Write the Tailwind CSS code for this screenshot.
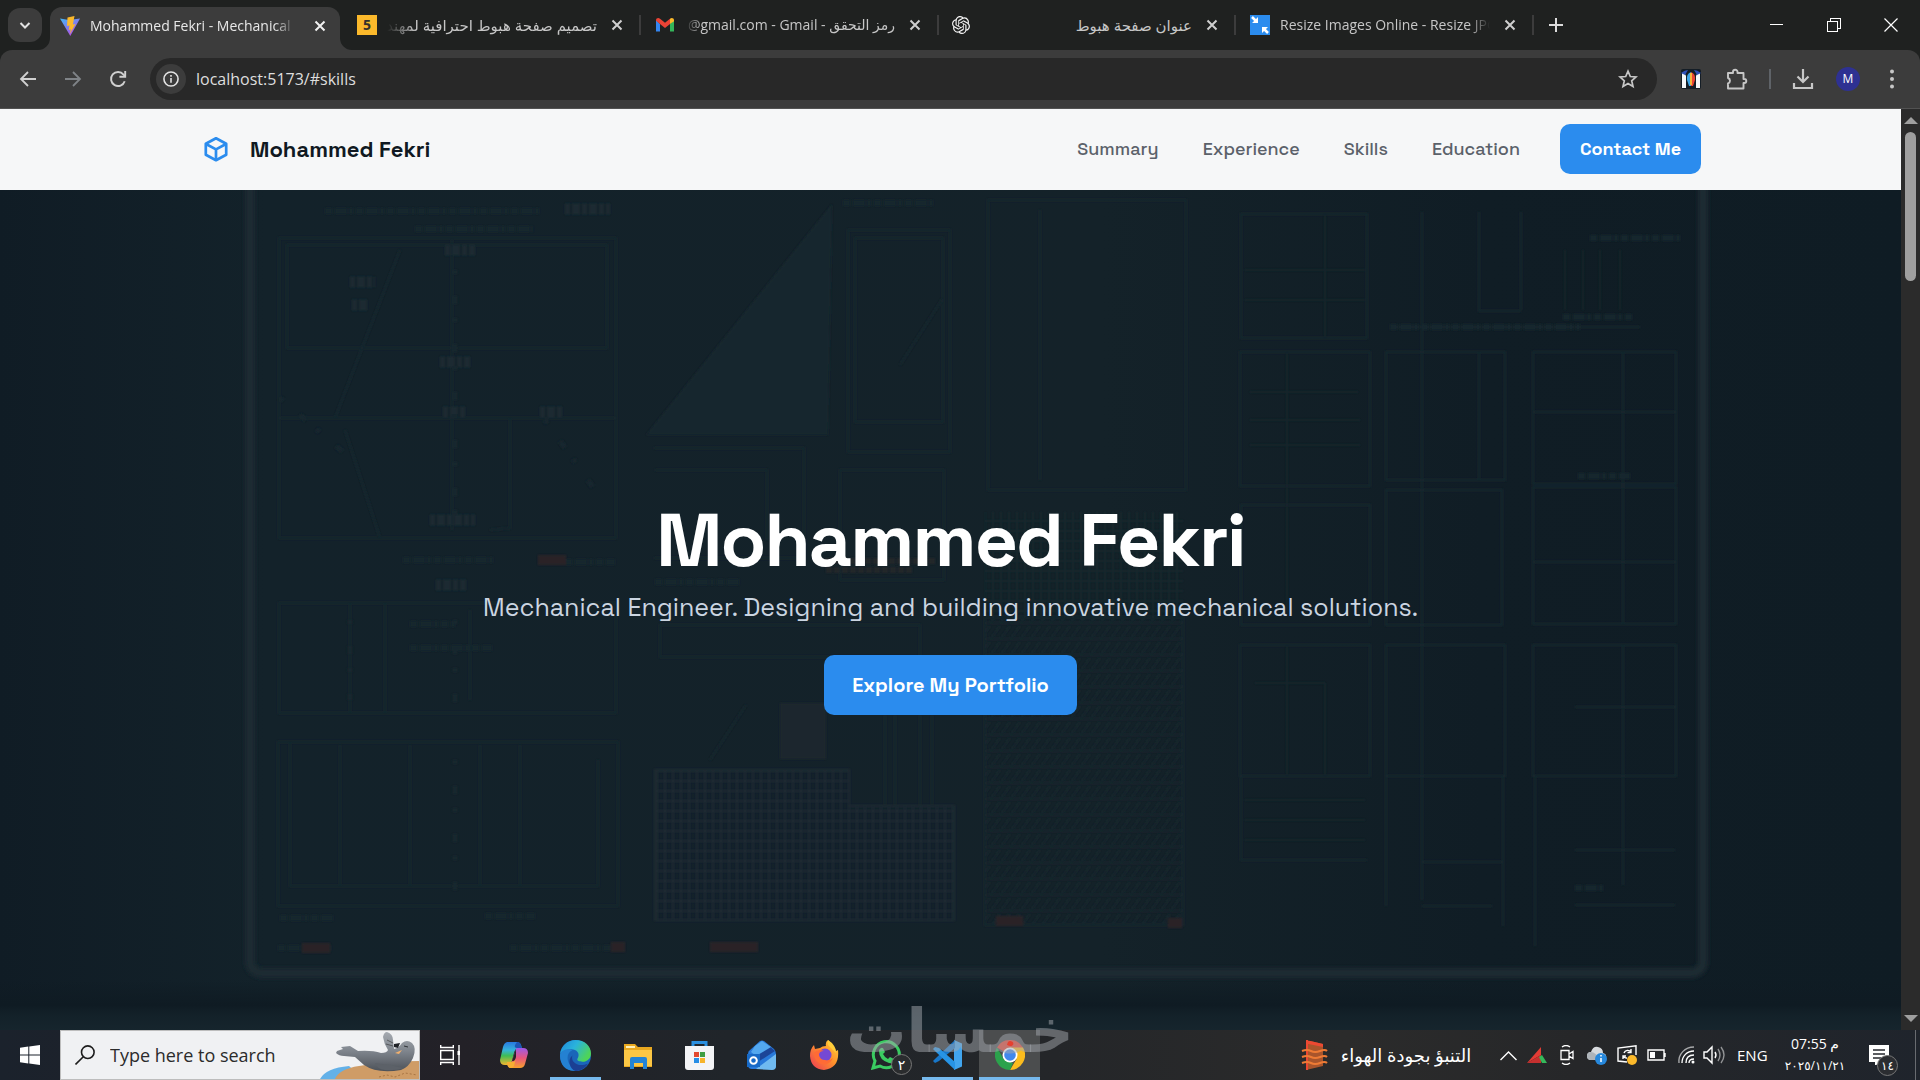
<!DOCTYPE html>
<html lang="en">
<head>
    <meta charset="UTF-8">
    <meta name="viewport" content="width=device-width, initial-scale=1.0">
    <title>Mohammed Fekri - Mechanical Engineer</title>
    <script src="https://cdn.jsdelivr.net/npm/@tailwindcss/browser@4"></script>
</head>
<body class="flex h-screen flex-col overflow-hidden bg-[#13212a] font-['Segoe_UI','Open_Sans','DejaVu_Sans',sans-serif]">

    <!-- Tab strip -->
    <div class="flex h-[50px] shrink-0 items-center bg-[#1f2120] text-sm text-[#c7c7c7]">
        <button aria-label="Search tabs" class="ml-2 mr-2 grid size-[34px] shrink-0 place-items-center rounded-xl bg-[#3c3c3c]">
            <svg class="size-4" viewBox="0 0 16 16" fill="none" stroke="#e3e3e3" stroke-width="2"><path d="M3.500 6l4.500 4.500L12.500 6"/></svg>
        </button>
        <div class="relative mt-[7px] flex h-[43px] w-[290px] shrink-0 items-center rounded-t-xl bg-[#3c3c3c] pl-2.5 pb-1.5 text-[#e8e8e8]">
            <svg class="absolute bottom-0 -left-3 size-3" viewBox="0 0 12 12"><path d="M12 0v12H0A12 12 0 0 0 12 0z" fill="#3c3c3c"/></svg>
            <svg class="absolute bottom-0 -right-3 size-3" viewBox="0 0 12 12"><path d="M0 0v12h12A12 12 0 0 1 0 0z" fill="#3c3c3c"/></svg>
            <svg class="size-5 shrink-0" viewBox="0 0 20 20">
                <defs><linearGradient id="vite" x1="0" y1="0" x2=".6" y2="1"><stop stop-color="#41b8f5"/><stop offset="1" stop-color="#b54ee8"/></linearGradient></defs>
                <path d="M0 2.500l9 1.500 11-1.500L10.300 20z" fill="url(#vite)"/><path d="M14.500 0L7.500 1.500 7 10l2.500-.6-.8 4.500 2.200-.6-1.200 5 5.800-10.400-2.600.6z" fill="#fbb92b"/>
            </svg>
            <span class="ml-2.5 w-[205px] overflow-hidden whitespace-nowrap [mask-image:linear-gradient(to_right,black_90%,transparent)]">Mohammed Fekri - Mechanical Engineer</span>
            <button aria-label="Close tab" class="ml-[17px] grid size-4 place-items-center"><svg class="size-3" viewBox="0 0 12 12" stroke="#f1f1f1" stroke-width="2"><path d="M1.500 1.500l9 9M10.500 1.500l-9 9"/></svg></button>
        </div>
        <div class="ml-1 flex h-5 w-[297px] shrink-0 items-center border-r-2 border-[#3c3c3c] pl-[13px]">
            <span class="grid size-5 shrink-0 place-items-center bg-[#fbb92b] text-sm font-bold text-[#33312c]">5</span>
            <span dir="rtl" class="ml-2.5 w-[210px] overflow-hidden whitespace-nowrap text-[15px] leading-6 [mask-image:linear-gradient(to_left,black_86%,transparent)]">تصميم صفحة هبوط احترافية لمهندس</span>
            <button aria-label="Close tab" class="ml-3 grid size-4 place-items-center"><svg class="size-3" viewBox="0 0 12 12" stroke="#cfcfcf" stroke-width="2"><path d="M1.500 1.500l9 9M10.500 1.500l-9 9"/></svg></button>
        </div>
        <div class="flex h-5 w-[298px] shrink-0 items-center border-r-2 border-[#3c3c3c] pl-[13px]">
            <svg class="ml-px size-5 shrink-0" viewBox="0 0 20 20"><path d="M1 5v11.500h4V9z" fill="#3486f0"/><path d="M19 5v11.500h-4V9z" fill="#34b55a"/><path d="M1 5.500C1 3 3.500 2.500 5 3.800l5 4 5-4 0 5.200-5 4-5-4-4-3.200z" fill="#ea4335"/><path d="M15 3.800c1.700-1.400 4-.6 4 1.600v.8L15 9z" fill="#fbb92b"/></svg>
            <span dir="rtl" class="ml-2.5 w-[210px] overflow-hidden whitespace-nowrap leading-6 [mask-image:linear-gradient(to_left,black_92%,transparent)]">رمز التحقق - <bdi dir="ltr">@gmail.com - Gmail</bdi></span>
            <button aria-label="Close tab" class="ml-3 grid size-4 place-items-center"><svg class="size-3" viewBox="0 0 12 12" stroke="#cfcfcf" stroke-width="2"><path d="M1.500 1.500l9 9M10.500 1.500l-9 9"/></svg></button>
        </div>
        <div class="flex h-5 w-[297px] shrink-0 items-center border-r-2 border-[#3c3c3c] pl-[13px]">
            <svg class="size-[18px] shrink-0" viewBox="0 0 24 24" fill="#f4f4f4"><path d="M22.2819 9.8211a5.9847 5.9847 0 0 0-.5157-4.9108 6.0462 6.0462 0 0 0-6.5098-2.9A6.0651 6.0651 0 0 0 4.9807 4.1818a5.9847 5.9847 0 0 0-3.9977 2.9 6.0462 6.0462 0 0 0 .7427 7.0966 5.98 5.98 0 0 0 .511 4.9107 6.051 6.051 0 0 0 6.5146 2.9001A5.9847 5.9847 0 0 0 13.2599 24a6.0557 6.0557 0 0 0 5.7718-4.2058 5.9894 5.9894 0 0 0 3.9977-2.9001 6.0557 6.0557 0 0 0-.7475-7.0729zm-9.022 12.6081a4.4755 4.4755 0 0 1-2.8764-1.0408l.1419-.0804 4.7783-2.7582a.7948.7948 0 0 0 .3927-.6813v-6.7369l2.02 1.1686a.071.071 0 0 1 .038.052v5.5826a4.504 4.504 0 0 1-4.4945 4.4944zm-9.6607-4.1254a4.4708 4.4708 0 0 1-.5346-3.0137l.142.0852 4.783 2.7582a.7712.7712 0 0 0 .7806 0l5.8428-3.3685v2.3324a.0804.0804 0 0 1-.0332.0615L9.74 19.9502a4.4992 4.4992 0 0 1-6.1408-1.6464zM2.3408 7.8956a4.485 4.485 0 0 1 2.3655-1.9728V11.6a.7664.7664 0 0 0 .3879.6765l5.8144 3.3543-2.0201 1.1685a.0757.0757 0 0 1-.071 0l-4.8303-2.7865A4.504 4.504 0 0 1 2.3408 7.872zm16.5963 3.8558L13.1038 8.364 15.1192 7.2a.0757.0757 0 0 1 .071 0l4.8303 2.7913a4.4944 4.4944 0 0 1-.6765 8.1042v-5.6772a.79.79 0 0 0-.407-.667zm2.0107-3.0231l-.142-.0852-4.7735-2.7818a.7759.7759 0 0 0-.7854 0L9.409 9.2297V6.8974a.0662.0662 0 0 1 .0284-.0615l4.8303-2.7866a4.4992 4.4992 0 0 1 6.6802 4.66zM8.3065 12.863l-2.02-1.1638a.0804.0804 0 0 1-.038-.0567V6.0742a4.4992 4.4992 0 0 1 7.3757-3.4537l-.142.0805L8.704 5.459a.7948.7948 0 0 0-.3927.6813zm1.0976-2.3654l2.602-1.4998 2.6069 1.4998v2.9994l-2.5974 1.4997-2.6067-1.4997Z"/></svg>
            <span dir="rtl" class="ml-3 w-[210px] overflow-hidden whitespace-nowrap text-[15px] leading-6">عنوان صفحة هبوط</span>
            <button aria-label="Close tab" class="ml-3 grid size-4 place-items-center"><svg class="size-3" viewBox="0 0 12 12" stroke="#cfcfcf" stroke-width="2"><path d="M1.500 1.500l9 9M10.500 1.500l-9 9"/></svg></button>
        </div>
        <div class="flex h-5 w-[298px] shrink-0 items-center border-r-2 border-[#3c3c3c] pl-[13px]">
            <svg class="ml-px size-5 shrink-0" viewBox="0 0 20 20"><path d="M0 0h20v20H0z" fill="#2b8cee"/><path d="M2 2l4 4M18 18l-4-4" stroke="#fff" stroke-width="2.500"/><path d="M8 2v6H2zM12 18v-6h6z" fill="#fff"/></svg>
            <span class="ml-2.5 w-[210px] overflow-hidden whitespace-nowrap leading-6 [mask-image:linear-gradient(to_right,black_90%,transparent)]">Resize Images Online - Resize JPG</span>
            <button aria-label="Close tab" class="ml-3 grid size-4 place-items-center"><svg class="size-3" viewBox="0 0 12 12" stroke="#cfcfcf" stroke-width="2"><path d="M1.500 1.500l9 9M10.500 1.500l-9 9"/></svg></button>
        </div>
        <button aria-label="New tab" class="ml-3.5 grid size-4 place-items-center"><svg class="size-3.5" viewBox="0 0 14 14" stroke="#dcdcdc" stroke-width="2"><path d="M7 0v14M0 7h14"/></svg></button>
        <div class="ml-auto mr-[22px] flex items-center gap-[43px]">
            <button aria-label="Minimize"><svg class="size-3.5" viewBox="0 0 14 14" stroke="#fff" stroke-width="1" shape-rendering="crispEdges"><path d="M0 6.500h13"/></svg></button>
            <button aria-label="Restore"><svg class="size-3.5" viewBox="0 0 14 14" fill="none" stroke="#fff" shape-rendering="crispEdges"><path d="M.5 3.500h10v10H.5zM3.500 3V.5h10v10H11"/></svg></button>
            <button aria-label="Close"><svg class="size-3.5" viewBox="0 0 14 14" stroke="#fff" stroke-width="1.200"><path d="M.5.5l13 13M13.500.5l-13 13"/></svg></button>
        </div>
    </div>

    <!-- Toolbar -->
    <div class="shrink-0 bg-[#1f2120]">
    <div class="flex h-[59px] items-center rounded-t-xl border-b border-[#525252] bg-[#3c3c3c] px-[18px]">
        <button aria-label="Back"><svg class="size-5" viewBox="0 0 20 20" fill="none" stroke="#d0d0d0" stroke-width="1.800"><path d="M18 10H3.500M10 3l-7 7 7 7"/></svg></button>
        <button aria-label="Forward" class="ml-[25px]"><svg class="size-5" viewBox="0 0 20 20" fill="none" stroke="#7f8387" stroke-width="1.800"><path d="M2 10h14.500M10 3l7 7-7 7"/></svg></button>
        <button aria-label="Reload" class="ml-[25px]"><svg class="size-5" viewBox="0 0 20 20" fill="none" stroke="#d0d0d0" stroke-width="1.900"><path d="M16.700 12.200A7 7 0 1 1 15.500 5.600l1.500 1.600"/><path d="M17.200 2v5.800h-5.800"/></svg></button>
        <div class="ml-[22px] flex h-[42px] flex-1 items-center rounded-full bg-[#282828] pl-1.5 pr-[19px]">
            <span class="grid size-[30px] place-items-center rounded-full bg-[#3c3c3c]">
                <svg class="size-4" viewBox="0 0 17 17" fill="none" stroke="#e3e3e3" stroke-width="1.700"><circle cx="8.500" cy="8.500" r="7.500"/><path d="M8.500 7.500v5M8.500 4.200v1.800"/></svg>
            </span>
            <input aria-label="Address" value="localhost:5173/#skills" class="ml-2.5 min-w-0 flex-1 bg-transparent text-base text-[#dedede] outline-none">
            <button aria-label="Bookmark this tab"><svg class="size-5" viewBox="0 0 20 20" fill="none" stroke="#c7c7c7" stroke-width="1.700"><path d="M10 2.200l2.300 5.300 5.700.5-4.300 3.800 1.300 5.600-5-3-5 3 1.300-5.600L2 8l5.700-.5z"/></svg></button>
        </div>
        <svg class="ml-6 size-5" viewBox="0 0 20 20"><rect width="20" height="20" rx="2" fill="#141d26"/><path d="M1 4q3 0 4 3v12H1zM19 4q-3 0-4 3v12h4z" fill="#f6f8fa"/><path d="M0 4q4-3 7-3l-3 5zM20 4q-4-3-7-3l3 5z" fill="#2f50b8"/><path d="M10 3Q5 5 6 11l2 6h2z" fill="#3da5e8"/><path d="M10 3q5 2 4 8l-2 6h-2z" fill="#ea4335"/><path d="M9 4h2v12H9z" fill="#f4b33d"/></svg>
        <button aria-label="Extensions" class="ml-6"><svg class="size-[23px]" viewBox="0 0 23 23" fill="none" stroke="#c7c7c7" stroke-width="1.900" stroke-linejoin="round"><path d="M3 5h5V4a2 2 0 0 1 4.500 0v1h6v6h.8a2 2 0 0 1 0 4h-.8v5.500H3v-5a2.900 2.900 0 0 0 0-5.500z"/></svg></button>
        <span class="ml-[21px] h-5 w-0.5 bg-[#5f6368]"></span>
        <button aria-label="Downloads" class="ml-[21px]"><svg class="size-[22px]" viewBox="0 0 22 22" fill="none" stroke="#c7c7c7" stroke-width="2.200"><path d="M11 1v13M5.500 8.500L11 14l5.500-5.500M2 15v5h18v-5"/></svg></button>
        <button aria-label="Profile" class="ml-[22px] grid size-6 place-items-center rounded-full bg-[#2e3192] text-xs text-white">M</button>
        <button aria-label="Menu" class="ml-[22px]"><svg class="size-5" viewBox="0 0 20 20" fill="#c7c7c7"><circle cx="10" cy="2.500" r="2"/><circle cx="10" cy="10" r="2"/><circle cx="10" cy="17.500" r="2"/></svg></button>
    </div>
    </div>

    <!-- Page with its scrollbar -->
    <div class="flex min-h-0 flex-1">
        <div class="flex min-w-0 flex-1 flex-col font-['Space_Grotesk','Inter',sans-serif]">
            <header class="flex h-[81px] shrink-0 items-center justify-between bg-[#f6f7f8] px-[200px] pb-0.5">
                <div class="flex items-center gap-[18px]">
                    <svg class="size-8" viewBox="0 0 32 32" fill="none" stroke="#2b8cee" stroke-width="2.700" stroke-linejoin="round"><path d="M16 5.300l10.200 5.500v11L16 27.200 5.800 21.800v-11z"/><path d="M6 11l10 5.400L26 11M16 16.400v10.500"/></svg>
                    <span class="text-[22px] font-bold leading-7 text-[#101922]">Mohammed Fekri</span>
                </div>
                <nav class="flex items-center gap-11 text-lg font-medium text-[#5b616a]">
                    <a href="#summary">Summary</a>
                    <a href="#experience">Experience</a>
                    <a href="#skills">Skills</a>
                    <a href="#education">Education</a>
                    <a href="#contact" class="-ml-1 grid h-[50px] w-[141px] place-items-center rounded-[10px] bg-[#2b8cee] font-bold text-white">Contact Me</a>
                </nav>
            </header>

            <main class="relative flex flex-1 flex-col items-center justify-center overflow-hidden bg-[linear-gradient(90deg,#101c25_0%,#13222a_14%,#142229_58%,#101d25_78%,#0f1c24_100%)] pb-3">
                <!-- Blueprint drawing behind the hero text -->
                <svg class="absolute inset-0 size-full" viewBox="0 190 1901 840" preserveAspectRatio="none" fill="none">
                    <defs>
                        <filter id="soft" x="-5%" y="-5%" width="110%" height="110%"><feGaussianBlur stdDeviation="1.2"/></filter>
                        <filter id="glow" x="-5%" y="-5%" width="110%" height="110%"><feGaussianBlur stdDeviation="2"/></filter>
                        <linearGradient id="desk" x1="0" y1="980" x2="0" y2="1030" gradientUnits="userSpaceOnUse"><stop stop-color="#0f1b23" stop-opacity="0"/><stop offset=".5" stop-color="#0f1b23"/><stop offset=".7" stop-color="#132129"/><stop offset="1" stop-color="#16252d"/></linearGradient>
                        <pattern id="mesh" width="8" height="10" patternUnits="userSpaceOnUse"><path d="M1 0v10M0 1h8" stroke="#1a2930" stroke-width="2"/></pattern>
                        <pattern id="hatch" width="10" height="16" patternUnits="userSpaceOnUse"><path d="M0 16L10 2M0 15h10" stroke="#18272e" stroke-width="1.500"/></pattern>
                    </defs>
                    <path d="M0 980h1901v50H0z" fill="url(#desk)"/>
                    <path d="M250 160V960q0 13 13 13H1690q13 0 13-13V160" stroke="#1b2930" stroke-width="10" filter="url(#glow)"/>
                    <g filter="url(#soft)">
                        <path d="M832 204L646 435h182z" fill="#19272e"/>
                        <g stroke="#17262d" stroke-width="2">
                            <path d="M279 238h337v300H279zM287 245h320v103H287zM279 418h337M400 250L335 418M380 538L345 430M510 418v110L490 530M452 240v290"/>
                            <path d="M279 603h337v110H279zM385 603v110M350 603v110M470 610v90M278 742h340v164H278zM290 742v144h308V760M340 745v140M410 745v140M480 745v140M520 745v140"/>
                            <path d="M848 230h102v222H848zM855 238h88v184h-88zM943 298L900 365M654 448h150v110H654M655 470h112v70M840 470h104v110H840zM988 200h198v290H988zM1040 210v270"/>
                            <path d="M660 625h260v32H660zM746 705l-36 55M885 715v90M895 715v90M920 715v90M932 715v90"/>
                        </g>
                        <g stroke="#16252d" stroke-width="2">
                            <path d="M1241 214h126v124h-126zM1240 352h130v134h-130zM1386 352h119v128h-119zM1533 352h143v132h-143zM1241 505h129v120h-129zM1386 490h116v135h-116zM1533 487h143v137h-143zM1240 645h130v131h-130zM1386 645h119v131h-119zM1533 645h143v131h-143z"/>
                            <path d="M1422 212V900M1479 212v99h42M1479 352v128M1521 212v98M1623 352v272M1533 412h143M1533 562h143M1623 645v240M1575 707h101M1241 776v84h126M1386 776v130M1503 776v150M1535 776v170M1422 862h82M1422 906h70M1575 850h100M1575 905h100M1390 327h250"/>
                            <path d="M1245 270h120M1245 300h120M1250 392h108M1250 420h110M1250 445h110M1325 214v124M1287 352v260M1287 645v131M1325 683v93M1255 683h70M1245 800h120M1245 820h120M1245 840h120M1565 250v60M1583 250v60M1600 250v60M1620 250v60" opacity=".6"/>
                        </g>
                        <path d="M655 770h194v36h105v114H655z" fill="url(#mesh)" stroke="#1b2930" stroke-width="2"/>
                        <path d="M985 512h198v105H985z" fill="url(#mesh)" opacity=".5"/>
                        <path d="M985 617h198v308H985z" fill="url(#hatch)" stroke="#18262d" stroke-width="2"/>
                        <path d="M780 703h46v56h-46z" fill="#1a282f"/>
                        <path d="M825 561h110M826 570h88" stroke="#202529" stroke-width="6" stroke-dasharray="6 2"/>
                        <!-- Smudged labels and callouts -->
                        <g stroke="#19272e" stroke-width="6" stroke-dasharray="7 3 12 2 4 3">
                            <path d="M325 211h215M843 203h90M415 229h118M403 560h90M565 562h50M280 918h55M485 916h50M510 948h108M278 948h54M655 582h85M410 624h45M410 648h82M1390 327h190M1590 238h90M1563 317h70M1578 476h52M1575 888h30"/>
                        </g>
                        <path d="M565 209h45M440 362h30M443 412h24M350 282h25M352 305h16M540 412h24M445 250h30M436 585h30M430 520h45" stroke="#1b2930" stroke-width="11" stroke-dasharray="5 2 8 2"/>
                        <path d="M455 270v250M455 620v85M455 760v130M280 398l70 60M545 420l50 70M350 620v80" stroke="#19272e" stroke-width="5" stroke-dasharray="4 22 8 14"/>
                        <path d="M538 560h28M302 948h28M611 947h14M710 947h48M996 921h27M1168 923h14" stroke="#2c2427" stroke-width="10"/>
                    </g>
                </svg>
                <h1 class="relative text-[75px] font-bold leading-[94px] tracking-tight text-white">Mohammed Fekri</h1>
                <p class="relative text-[25px] leading-10 text-[#cbd5e1]">Mechanical Engineer. Designing and building innovative mechanical solutions.</p>
                <a href="#summary" class="relative mt-7 grid h-[60px] w-[253px] place-items-center rounded-[10px] bg-[#2b8cee] text-xl font-bold text-white">Explore My Portfolio</a>
            </main>
        </div>
        <div class="flex w-[19px] shrink-0 flex-col items-center bg-[#2b2b2b] py-2">
            <svg class="h-[7px] w-3.5" viewBox="0 0 14 7" fill="#9f9f9f"><path d="M7 0l7 7H0z"/></svg>
            <span class="mt-2 h-[149px] w-[11px] rounded-full bg-[#9f9f9f]"></span>
            <svg class="mt-auto h-[7px] w-3.5" viewBox="0 0 14 7" fill="#9f9f9f"><path d="M7 7l7-7H0z"/></svg>
        </div>
    </div>

    <!-- Taskbar -->
    <footer class="relative flex h-[50px] shrink-0 items-center bg-[linear-gradient(90deg,#1b222c_0%,#232127_24%,#20252a_38%,#242629_55%,#2b2b2b_70%,#262729_82%,#1f242c_100%)] text-white">
        <button aria-label="Start" class="grid h-full w-[60px] shrink-0 place-items-center"><svg class="size-5" viewBox="0 0 20 20" fill="#fff"><path d="M0 2.800L8.300 1.600V9.500H0zM9.300 1.500L20 0v9.500H9.300zM0 10.500h8.300v7.900L0 17.200zM9.300 10.500H20V20L9.300 18.500z"/></svg></button>
        <label class="relative flex h-full w-[360px] shrink-0 items-center overflow-hidden border border-[#bdbdbd] bg-[#f0f1f3]">
            <svg class="ml-3.5 size-5" viewBox="0 0 20 20" fill="none" stroke="#1d1d1d" stroke-width="1.600"><circle cx="12.800" cy="7.200" r="6.300"/><path d="M8.300 11.700L.5 19.500"/></svg>
            <input aria-label="Search" placeholder="Type here to search" class="ml-[15px] w-[200px] bg-transparent text-lg text-[#222] outline-none placeholder:text-[#2b2b2b]">
            <svg class="absolute bottom-0 right-0 h-12 w-[100px]" viewBox="0 0 100 48">
                <defs><linearGradient id="seal" x1="0" y1="0" x2="0" y2="1"><stop stop-color="#a5aab1"/><stop offset=".5" stop-color="#7e848c"/><stop offset="1" stop-color="#4c5158"/></linearGradient></defs>
                <path d="M1 48Q7 37 30 35L44 48z" fill="#63b1e8"/><path d="M16 48Q20 38 40 35 70 30 100 30v18z" fill="#cf9c66"/>
                <path d="M60 46l8-2 8 2 10-4 12 2" stroke="#a87543" stroke-dasharray="2 2" fill="none"/>
                <path d="M18 20l6-2-2-2 9-1 8 5q14-1 23 2 6 0 7-3-4-6-5-13 1-5 4-5 6 2 6 8l1 9q5-1 8-6 5-4 10 0 5 5 1 15-4 9-12 12-24 4-37-5l-9-8-11-1q-5 0-8-3z" fill="url(#seal)"/>
                <path d="M56 32q2 6 10 7 10 1 19-2-8-1-13-3-9-1-16-2z" fill="#5c6168"/><path d="M75 13l6-1-2 5-4-1z" fill="#1f2227"/><path d="M76 22l7-3-3 4z" fill="#f2b06d"/><path d="M74 12l-6-3M74 15l-7-2" stroke="#333" stroke-width=".6"/><path d="M85 15l4 1" stroke="#2f3338" fill="none"/>
            </svg>
        </label>
        <button aria-label="Task view" class="grid h-full w-[60px] shrink-0 place-items-center"><svg class="size-5" viewBox="0 0 20 20" fill="none" stroke="#fff" stroke-width="1.400"><path d="M.7 5.500h12.600v9H.7zM.7 0v2.500h12.600V0M.7 20v-2.500h12.600V20M19 0v20"/><path d="M17.500 6h3v4h-3z" fill="#fff" stroke="none"/></svg></button>
        <div class="ml-[3px] flex h-full shrink-0 gap-px">
            <button aria-label="Copilot" class="grid w-[61px] place-items-center">
                <svg class="size-[30px]" viewBox="0 0 30 30">
                    <defs><linearGradient id="cpa" x1="0" y1="0" x2="0" y2="1"><stop stop-color="#2878e0"/><stop offset=".35" stop-color="#35b3dc"/><stop offset=".6" stop-color="#3ebd55"/><stop offset="1" stop-color="#f4b72e"/></linearGradient><linearGradient id="cpb" x1="0" y1="0" x2="0" y2="1"><stop stop-color="#9d59e8"/><stop offset=".5" stop-color="#e8567c"/><stop offset="1" stop-color="#f6a12c"/></linearGradient></defs>
                    <path d="M8 2h10q3 0 4 3l1 4h-5q-2 0-3 4l-2 8q-1 4-4 4H6q-5 0-5-5L4 7q1-4 4-5z" fill="url(#cpa)"/><path d="M18 2q3 0 4 3l1 3h-5q-3 0-2-3z" fill="#1d55b5"/>
                    <path d="M18 8h6q5 0 5 5l-3 11q-1 4-5 4H12q-3 0-4-4l2 1q2 0 3-4l3-9q1-4 2-4z" fill="url(#cpb)"/><path d="M8 22h6q2 0 3-4l-2 8q-1 2-3 2-4 0-4-6z" fill="#f5ae32"/><path d="M17 9l-4 12h1q2 0 3-4z" fill="#242228"/>
                </svg>
            </button>
            <button aria-label="Edge" class="relative grid w-[61px] place-items-center">
                <svg class="size-[31px]" viewBox="0 0 30 30">
                    <defs><linearGradient id="edge" x1="0" y1="0" x2="1" y2=".5"><stop stop-color="#1f86dc"/><stop offset=".5" stop-color="#2ab3dc"/><stop offset="1" stop-color="#4ed458"/></linearGradient></defs>
                    <circle cx="15" cy="15" r="15" fill="#1a66b9"/><path d="M0 14C1 5 8 0 15 0c9 0 15 6 15 13 0 5-4 8-8 8-4 0-6-1-5-3 3-5-1-9-6-9C5 9 1 12 0 14z" fill="url(#edge)"/><path d="M0 14c2-5 8-6 12-4-5 2-6 8-3 13 2 4 6 6 10 6C8 32 0 26 0 15z" fill="#2481d2"/><path d="M12 15c-2 6 5 12 15 8-3 5-8 7-12 7-6-2-8-11-3-15z" fill="#1b3f93"/>
                </svg>
                <span class="absolute bottom-0 h-[3px] w-[51px] bg-[#76b9ed]"></span>
            </button>
            <button aria-label="File Explorer" class="grid w-[61px] place-items-center"><svg class="size-7" viewBox="0 0 28 28"><path d="M0 3h11l3 3h14v20H0z" fill="#e9a820"/><path d="M0 9h28v16H0z" fill="#fcc745"/><path d="M2 5h9v2H2z" fill="#fff0b8"/><path d="M6 28V18q0-2 2-2h13q2 0 2 2v10h-4v-6h-9v6z" fill="#2384d6"/></svg></button>
            <button aria-label="Microsoft Store" class="grid w-[61px] place-items-center"><svg class="size-[31px]" viewBox="0 0 31 31" fill="none"><path d="M9 8V2.500h13V8" stroke="#2a8fdf" stroke-width="3"/><path d="M1 6h29v21q0 3-3 3H4q-3 0-3-3z" fill="#f3f4f6"/><path d="M10 12h5v5h-5z" fill="#e2492f"/><path d="M16 12h5v5h-5z" fill="#3d9e43"/><path d="M10 18h5v5h-5z" fill="#268ee6"/><path d="M16 18h5v5h-5z" fill="#f6b42b"/></svg></button>
            <button aria-label="Outlook" class="grid w-[61px] place-items-center"><svg class="size-[30px]" viewBox="0 0 30 30"><path d="M3 10L13 1q2-1 4 0l10 8q2 2 2 5v12q0 3-4 3H5q-4 0-4-4V14q0-3 2-4z" fill="#2879da"/><path d="M6 14l15-9 7 6-17 11z" fill="#1c4598"/><path d="M8 6l7-5 9 6-15 9-5-4z" fill="#53a8ef"/><path d="M9 29l20-15v12q0 4-4 4z" fill="#70baf0"/><path d="M0 14h13v13H0z" fill="#176ac7"/><circle cx="6.500" cy="20.500" r="3.300" fill="none" stroke="#fff" stroke-width="2"/></svg></button>
            <button aria-label="Firefox" class="grid w-[61px] place-items-center">
                <svg class="size-[30px]" viewBox="0 0 30 30"><defs><linearGradient id="fox" x1="1" y1="0" x2="0" y2="1"><stop stop-color="#ffd43c"/><stop offset=".45" stop-color="#ff922b"/><stop offset="1" stop-color="#ea3557"/></linearGradient></defs><path d="M1 16q0-7 4-11l1 4 5-1q2-2 6-2-1-4 2-6 3 3 5 6 3 2 3 5l2-1q2 18-14 20Q2 29 1 16z" fill="url(#fox)"/><circle cx="16" cy="15" r="6.500" fill="#7449d4"/><path d="M5 13q4-5 10-2-5 0-5 4 1 5 6 5 5 1 8-2-4 8-12 6-7-3-7-11z" fill="#ff6b35"/><path d="M20 6q-2-2-1-6 8 5 8 13l-4-4z" fill="#ffcd3a"/></svg>
            </button>
            <button aria-label="WhatsApp" class="relative grid w-[61px] place-items-center">
                <svg class="size-[30px]" viewBox="0 0 30 30" fill="none"><path d="M2 28l2-7a13 13 0 1 1 5 5z" stroke="#3acb61" stroke-width="3"/><path d="M10 8q2-1 3 2l1 2-2 2q2 4 5 5l2-2 4 2q0 5-5 4Q8 20 8 11q0-2 2-3z" fill="#3acb61"/></svg>
                <span class="absolute left-9 top-6 grid size-[21px] place-items-center rounded-full border border-[#777] bg-[#2a2c2e] text-sm leading-none">٢</span>
            </button>
            <button aria-label="Visual Studio Code" class="relative grid w-[61px] place-items-center">
                <svg class="size-[30px]" viewBox="0 0 30 30"><path d="M21 0l8 3.500v23L21 30z" fill="#41a5ee"/><path d="M0 21l2 2 4-2L22 8V0L3 18z" fill="#1877c9"/><path d="M0 9l2-2 4 1 16 14v8L3 12z" fill="#2794e5"/></svg>
                <span class="absolute bottom-0 h-[3px] w-[51px] bg-[#76b9ed]"></span>
            </button>
            <button aria-label="Chrome" class="relative grid w-[61px] place-items-center bg-[#4b4d4e]">
                <svg class="size-[30px]" viewBox="0 0 30 30"><path d="M15 15L2 7.500A15 15 0 0 1 28 7.500z" fill="#e6402f"/><path d="M15 7.500h13A15 15 0 0 1 15 30l6.500-11z" fill="#fbbc1e"/><path d="M2 7.500l6.500 11.300L15 22l3 1-3 7A15 15 0 0 1 2 7.500z" fill="#2ba24c"/><circle cx="15" cy="15" r="7.500" fill="#fff"/><circle cx="15" cy="15" r="5.800" fill="#4288ed"/></svg>
                <span class="absolute bottom-0 h-[3px] w-full bg-[#76b9ed]"></span>
            </button>
        </div>

        <div class="ml-auto flex h-full items-center">
            <button class="flex items-center gap-2.5 text-lg">
                <svg class="size-[30px]" viewBox="0 0 26 30"><path d="M4 0l17 4v22L4 30z" fill="#a9552c"/><path d="M4 0l17 4v3L4 3.500zM4 0h2v30H4z" fill="#ec4932"/><path d="M0 11q5-2 9 0t9 0 7 0M0 17q5-2 9 0t9 0 7 0M0 23q5-2 9 0t9 0 7 0" stroke="#ee7b35" stroke-width="2" fill="none"/></svg>
                <span dir="rtl" class="w-[132px] whitespace-nowrap">التنبؤ بجودة الهواء</span>
            </button>
            <div class="ml-7 flex items-center gap-2.5">
                <svg class="size-[17px]" viewBox="0 0 17 17" fill="none" stroke="#fff" stroke-width="1.400"><path d="M.5 13l8-8 8 8"/></svg>
                <svg class="size-5" viewBox="0 0 20 20"><path d="M14 2v8L0 18z" fill="#e33c35"/><path d="M7 14l7-4v8H0z" fill="#c5302f"/><path d="M12 12l3-2 5 8h-5z" fill="#35b85a"/></svg>
                <svg class="size-5" viewBox="0 0 20 20" fill="none" stroke="#fff" stroke-width="1.300"><path d="M4 5.500h8v9H4zM12 9l4-2.500v7L12 11M5 2q4-3 8 0M5 18q4 3 8 0"/></svg>
                <svg class="size-5" viewBox="0 0 20 20"><path d="M4 15q-4 0-4-4t4-4Q6 1 11 2q5 1 5 6 4 1 3 5z" fill="#d7dadd"/><path d="M4 7q5 0 8 8H4q-4 0-4-4t4-4z" fill="#aeb4ba"/><circle cx="14" cy="14" r="6" fill="#2788dc"/><path d="M14 10v1.500M14 13v4" stroke="#fff" stroke-width="1.500"/></svg>
                <svg class="size-5" viewBox="0 0 20 20" fill="none" stroke="#fff" stroke-width="1.400"><path d="M19 10V.8L1 3v13l9 1"/><path d="M14 7a4 4 0 0 0-7 1M14 4v3.500h-3.500M6 11a4 4 0 0 0 4 2M6 14v-3h3"/><circle cx="15" cy="15" r="5" fill="#fbb92b" stroke="none"/></svg>
                <svg class="size-5" viewBox="0 0 20 20" fill="none" stroke="#fff" stroke-width="1.400"><path d="M1 5h16v10H1zM18 8v4"/><path d="M3 7h5v6H3z" fill="#fff" stroke="none"/></svg>
                <svg class="size-5" viewBox="0 0 20 20" fill="none" stroke="#fff" stroke-width="1.400"><path d="M2 18C1 9 8 2 17 2" opacity=".6"/><path d="M5 18C5 11 10 6 17 6M9 18q0-8 8-8M12 18q0-4 5-4"/><circle cx="16" cy="17" r="1.500" fill="#fff" stroke="none"/></svg>
                <svg class="-ml-1 size-[22px]" viewBox="0 0 22 22" fill="none" stroke="#fff" stroke-width="1.400"><path d="M1 8h3l5-5v16l-5-5H1zM12 8q2 3 0 6"/><path d="M15 5q4 6 0 12M18 3q6 8 0 16" opacity=".5"/></svg>
            </div>
            <span class="ml-3 w-[30px] text-[15px]">ENG</span>
            <button class="ml-4 flex w-16 flex-col items-center text-sm leading-[22px]">
                <span dir="rtl" class="whitespace-nowrap">م 07:55</span>
                <span class="whitespace-nowrap text-xs leading-[22px]">٢٠٢٥/١١/٢١</span>
            </button>
            <button aria-label="Notifications" class="relative ml-[22px] mr-[26px]">
                <svg class="size-5" viewBox="0 0 20 20"><path d="M0 0h20v17h-9l-5 4v-4H0z" fill="#fff"/><path d="M4 5h12M4 9h12M4 13h8" stroke="#26292e" stroke-width="1.300"/></svg>
                <span class="absolute left-2 top-2.5 grid size-[21px] place-items-center rounded-full border border-[#777] bg-[#2b2d31] text-xs leading-none">١٤</span>
            </button>
            <span class="mr-1 h-full w-px bg-[#686b70]"></span>
        </div>

        <!-- Watermark over the taskbar edge -->
        <span dir="rtl" class="pointer-events-none absolute -top-11 left-[845px] w-[230px] whitespace-nowrap text-center font-['DejaVu_Sans',sans-serif] text-6xl font-bold leading-[90px] text-[#a4a8ae]/50">خمسات</span>
    </footer>
</body>
</html>
